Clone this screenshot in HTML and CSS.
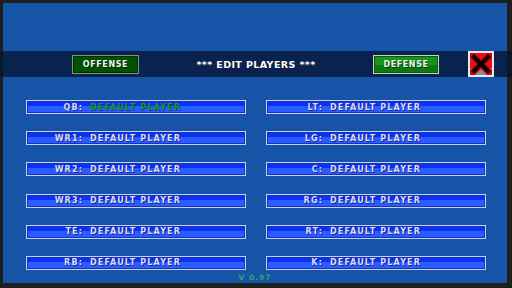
FILE: index.html
```html
<!DOCTYPE html>
<html>
<head>
<meta charset="utf-8">
<link rel="stylesheet" href="styles.css">
</head>
<body>
<div class="frame">
  <div class="screen">
    <div class="band">
      <div class="btn btn-offense">OFFENSE</div>
      <div class="title">*** EDIT PLAYERS ***</div>
      <div class="btn btn-defense">DEFENSE</div>
      <div class="close">
        <svg width="22" height="22" viewBox="0 0 22 22">
          <path d="M3 3 L19 19 M19 3 L3 19" stroke="#e00000" stroke-width="7" stroke-linecap="square" fill="none"/>
          <path d="M4 4 L18 18 M18 4 L4 18" stroke="#000" stroke-width="4" stroke-linecap="square" fill="none"/>
        </svg>
      </div>
    </div>
    <div class="roster">
      <div class="slot"><span class="pos">QB:</span><span class="name sel">DEFAULT PLAYER</span></div>
      <div class="slot"><span class="pos">LT:</span><span class="name">DEFAULT PLAYER</span></div>
      <div class="slot"><span class="pos">WR1:</span><span class="name">DEFAULT PLAYER</span></div>
      <div class="slot"><span class="pos">LG:</span><span class="name">DEFAULT PLAYER</span></div>
      <div class="slot"><span class="pos">WR2:</span><span class="name">DEFAULT PLAYER</span></div>
      <div class="slot"><span class="pos">C:</span><span class="name">DEFAULT PLAYER</span></div>
      <div class="slot"><span class="pos">WR3:</span><span class="name">DEFAULT PLAYER</span></div>
      <div class="slot"><span class="pos">RG:</span><span class="name">DEFAULT PLAYER</span></div>
      <div class="slot"><span class="pos">TE:</span><span class="name">DEFAULT PLAYER</span></div>
      <div class="slot"><span class="pos">RT:</span><span class="name">DEFAULT PLAYER</span></div>
      <div class="slot"><span class="pos">RB:</span><span class="name">DEFAULT PLAYER</span></div>
      <div class="slot"><span class="pos">K:</span><span class="name">DEFAULT PLAYER</span></div>
    </div>
    <div class="version">V 0.97</div>
  </div>
</div>
</body>
</html>
```
FILE: styles.css
```css
* { box-sizing: border-box; }
html, body { margin: 0; padding: 0; background: #1e1e1e; }
body { font-family: "DejaVu Sans", sans-serif; font-weight: bold; }

.frame {
  width: 512px;
  height: 288px;
  padding: 3px 5px 5px 3px;
  background: #1e1e1e;
  overflow: hidden;
}
.screen {
  height: 100%;
  background: #1654a8;
  display: flex;
  flex-direction: column;
}

.band {
  margin: 48px -5px 0 -3px;
  height: 26px;
  background: rgba(8, 22, 52, 0.78);
  display: flex;
  align-items: center;
  padding: 0 18px 0 72px;
}
.btn {
  height: 19px;
  width: 67px;
  display: flex;
  align-items: center;
  justify-content: center;
  font-size: 8px;
  letter-spacing: 0.6px;
  color: #eef2ee;
  text-shadow: 1px 1px 0 rgba(0, 0, 0, 0.55);
}
.btn-offense {
  background: #005200;
  border: 1px solid #8a8a8a;
  box-shadow: inset 0 0 0 1px #003200;
}
.btn-defense {
  width: 66px;
  background: linear-gradient(#16951a 0 55%, #0b7a10 55% 100%);
  border: 1px solid #c8d0c8;
  box-shadow: inset 0 0 0 1px #0a5a0a;
  margin-right: 29px;
}
.title {
  flex: 1;
  text-align: center;
  font-size: 9.5px;
  letter-spacing: 0.4px;
  color: #ffffff;
  text-shadow: 1px 1px 0 #1a1a3a;
}
.close {
  width: 26px;
  height: 26px;
  border: 2px solid #e6e6ee;
  background: linear-gradient(#ee1010 0 66%, #8a8a8a 66% 100%);
  display: flex;
  align-items: center;
  justify-content: center;
}

.roster {
  margin: 23px 0 0 23px;
  display: grid;
  grid-template-columns: 220px 220px;
  column-gap: 20px;
  row-gap: 17.2px;
}
.slot {
  height: 14px;
  border: 1px solid #c8d0f0;
  box-shadow: inset 0 0 0 1px #1830c8;
  background: linear-gradient(#0a32f0 0 45%, #2a5cff 45% 100%);
  display: flex;
  align-items: center;
  font-size: 8px;
  letter-spacing: 1.15px;
  color: #dcdcf4;
  text-shadow: 1px 1px 0 rgba(10, 20, 90, 0.7);
}
.pos {
  width: 57px;
  text-align: right;
  padding-right: 1px;
}
.name {
  margin-left: 6px;
}
.name.sel {
  color: #139a2a;
  text-shadow: 1px 1px 0 rgba(0, 40, 0, 0.5);
}

.version {
  margin-top: 3px;
  text-align: center;
  font-size: 7.5px;
  letter-spacing: 1px;
  color: #2fa85a;
}
```
